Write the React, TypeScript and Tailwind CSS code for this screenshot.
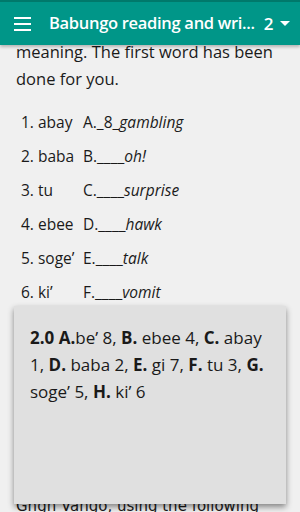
const rows: [string, string, string][] = [
  ["1. abay", "A._8_", "gambling"],
  ["2. baba", "B.____", "oh!"],
  ["3. tu", "C.____", "surprise"],
  ["4. ebee", "D.____", "hawk"],
  ["5. soge’", "E.____", "talk"],
  ["6. ki’", "F.____", "vomit"],
];

export default function App() {
  return (
    <div
      className="relative h-[512px] w-[300px] overflow-hidden bg-[#f0f0f0] text-[#1a1a1a]"
      style={{ fontFamily: '"Open Sans", "Noto Sans", sans-serif' }}
    >
      {/* app bar */}
      <div className="relative z-10 flex h-[45px] items-center border-t-2 border-[#00796b] bg-[#009688] text-white shadow-[0_2px_3px_rgba(0,0,0,0.25)]">
        <svg width="18" height="14" viewBox="0 0 18 14" className="ml-[14px] mr-[17px] shrink-0">
          <rect x="0" y="0" width="17" height="2" fill="white" />
          <rect x="0" y="6" width="17" height="2" fill="white" />
          <rect x="0" y="12" width="17" height="2" fill="white" />
        </svg>
        <span className="whitespace-nowrap text-[16.5px] font-semibold tracking-[-0.3px]">
          Babungo reading and wri...
        </span>
        <span className="ml-[9px] text-[17px] font-semibold">2</span>
        <svg width="10" height="5" viewBox="0 0 10 5" className="ml-[7px]">
          <path d="M0 0h10L5 5z" fill="white" />
        </svg>
      </div>

      {/* content */}
      <div className="-mt-[7px] px-4">
        <p className="text-[16.5px] leading-[27px]">
          meaning. The first word has been done for you.
        </p>
        <div className="mt-[20px] flex flex-col gap-[13px] pl-[5px] text-[15.5px] leading-[21px]">
          {rows.map(([n, l, w]) => (
            <div key={n} className="flex">
              <span className="w-[62px]">{n}</span>
              <span>{l}</span>
              <span className="italic">{w}</span>
            </div>
          ))}
        </div>
        <p className="mt-[193px] text-[15px] leading-[20px]" style={{ fontFamily: '"DejaVu Sans", sans-serif' }}>
          Ghgn Vango, using the following
        </p>
      </div>

      {/* popup */}
      <div className="absolute left-[14px] top-[306px] z-20 h-[198px] w-[272px] bg-[#e0e0e0] px-4 pt-[18px] text-[17px] leading-[27px] shadow-[0_3px_6px_rgba(0,0,0,0.45)]">
        <p>
          <b>2.0 A.</b>be’ 8, <b>B.</b> ebee 4, <b>C.</b> abay 1, <b>D.</b> baba 2, <b>E.</b> gi 7,{" "}
          <b>F.</b> tu 3, <b>G.</b> soge’ 5, <b>H.</b> ki’ 6
        </p>
      </div>
    </div>
  );
}
